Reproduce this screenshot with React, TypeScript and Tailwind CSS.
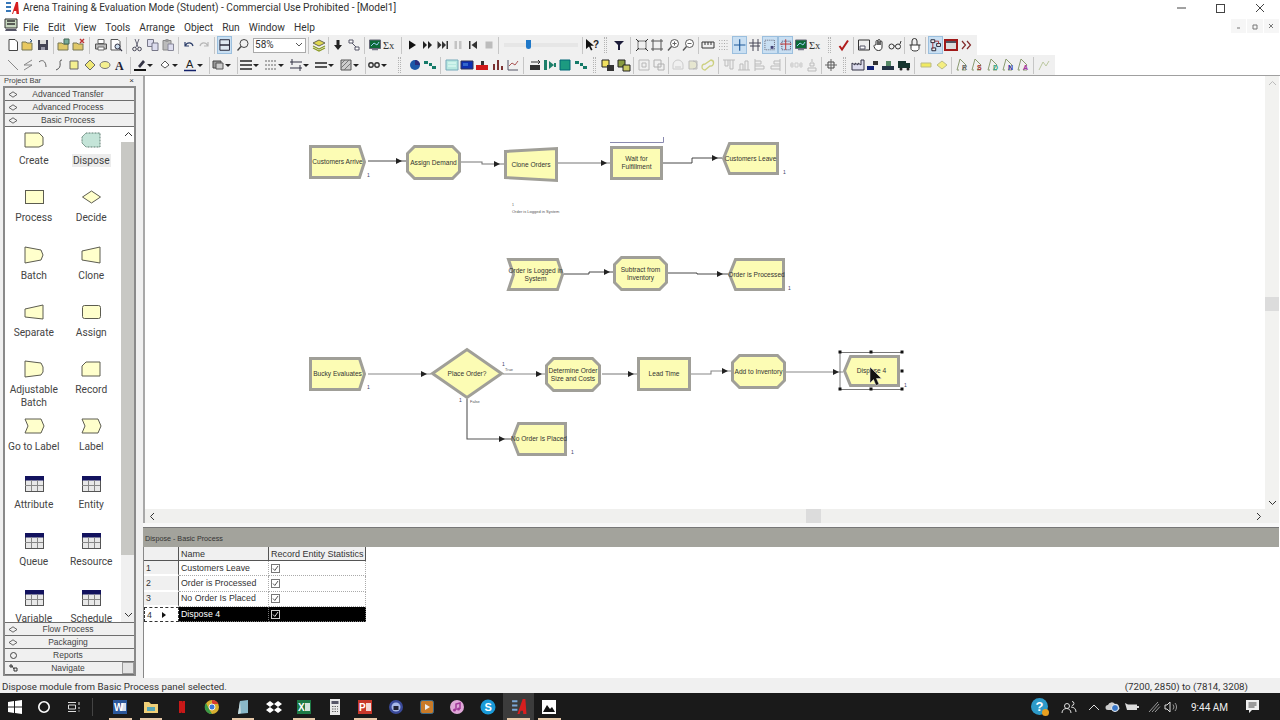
import React from "react";

type N = React.ReactNode;
const I: Record<string, N> = {
  doc: <path d="M3 1.500h6l2.500 2.500v8.500H3z" fill="#fff" stroke="#444" />,
  open: <><path d="M1 4h4l1 1h5v7H1z" fill="#e8c860" stroke="#775" /><path d="M9 1l2 2-2 1" fill="none" stroke="#357" /></>,
  save: <><path d="M2 2h10v10H2z" fill="#445" /><path d="M4 2h6v4H4z" fill="#ddd" /><path d="M5 9h4v3H5z" fill="#99a" /></>,
  opent: <><path d="M1 5h4l1 1h5v6H1z" fill="#e0c868" stroke="#775" /><path d="M7 1h5v5H7z" fill="#7a9" stroke="#465" /></>,
  openx: <><path d="M1 5h4l1 1h5v6H1z" fill="#e0c868" stroke="#775" /><path d="M8 1l4 4M12 1L8 5" stroke="#b33" strokeWidth="1.400" /></>,
  print: <><path d="M4 1.500h6v4H4z" fill="#fff" stroke="#666" /><path d="M1.500 6h11v5h-11z" fill="#bbb" stroke="#555" /><path d="M4 9h6v3H4z" fill="#fff" stroke="#666" /></>,
  prev: <><path d="M2 1.500h7l2 2V12H2z" fill="#fff" stroke="#555" /><circle cx="8.500" cy="8.500" r="2.500" fill="#cde" stroke="#334" /><path d="M10.500 10.500l2.500 2.500" stroke="#334" strokeWidth="1.300" /></>,
  cut: <><path d="M5 1l3 8M9 1L6 9" stroke="#667" /><circle cx="4.500" cy="11" r="1.800" fill="none" stroke="#445" /><circle cx="9.500" cy="11" r="1.800" fill="none" stroke="#445" /></>,
  copy: <><path d="M1.500 1.500h6v7h-6z" fill="#dde" stroke="#778" /><path d="M6 5h6v7.500H6z" fill="#dde" stroke="#778" /></>,
  paste: <><path d="M2 2.500h8V12H2z" fill="#bbb" stroke="#888" /><path d="M7 6h5.500v6.500H7z" fill="#dde" stroke="#889" /><path d="M4.500 1h3v3h-3z" fill="#999" /></>,
  undo: <path d="M3 4v4h4M3.500 7.500C5 4 10 4 11 8" fill="none" stroke="#2d3f6a" strokeWidth="1.200" />,
  redo: <path d="M11 4v4H7M10.500 7.500C9 4 4 4 3 8" fill="none" stroke="#b8b8b8" strokeWidth="1.200" />,
  layout: <><path d="M2 1.500h10v11H2z" fill="#dfe9f2" stroke="#223" /><path d="M2 7h10" stroke="#223" strokeWidth="1.500" /></>,
  zoom: <><circle cx="8" cy="5.500" r="4" fill="none" stroke="#444" /><path d="M5 8.500L1.500 12.500" stroke="#444" strokeWidth="1.400" /></>,
  layers: <><path d="M1 5l6-3 6 3-6 3z" fill="#e0d850" stroke="#665" /><path d="M1 8l6 3 6-3M1 10l6 3 6-3" fill="none" stroke="#8a9a20" strokeWidth="1.200" /></>,
  down: <path d="M5.500 2h3v5H11l-4 5-4-5h2.500z" fill="#222" />,
  conn: <><path d="M2 2h4v3H2zM8 9h4v3H8z" fill="#fff" stroke="#556" /><path d="M5 5l4 4" stroke="#556" /></>,
  screen: <><path d="M1.500 2h11v8.500h-11z" fill="#0d6a38" stroke="#667" /><path d="M3 8l3-3 3 2 2-3" fill="none" stroke="#9ce" /><path d="M4 11.500h6" stroke="#778" strokeWidth="1.500" /></>,
  sigma: <text x="0" y="11" fontSize="10.500" fontFamily="Liberation Serif" fill="#333">Σx</text>,
  play: <path d="M4 2.500l7 4.500-7 4.500z" fill="#111" />,
  ff: <path d="M3 3l4 4-4 4zM8 3l4 4-4 4z" fill="#222" />,
  ffe: <path d="M1.500 3l4 4-4 4zM6 3l4 4-4 4zM10.500 3H12v8h-1.500z" fill="#333" />,
  pause: <path d="M3.500 3h2.500v8H3.500zM8 3h2.500v8H8z" fill="#c4c4c4" />,
  back: <path d="M3 3h1.500v8H3zM11 3v8L5.500 7z" fill="#333" />,
  stop: <path d="M3.500 3.500h7v7h-7z" fill="#bcbcbc" />,
  help: <><path d="M1 1v10l3-2.500 2 4 1.500-.7-2-4H9z" fill="#111" /><text x="8" y="10" fontSize="10" fontWeight="bold" fontFamily="Liberation Sans" fill="#222">?</text></>,
  filter: <path d="M2 3h10L8 7v5H6V7z" fill="#1c1c3a" />,
  fit1: <><path d="M3 3h8v8H3z" fill="none" stroke="#777" /><path d="M1 1l3 3M13 1l-3 3M1 13l3-3M13 13l-3-3" stroke="#333" /></>,
  fit2: <path d="M1 3h12M1 11h12M3 1v12M11 1v12" fill="none" stroke="#555" />,
  zin: <><circle cx="8.500" cy="5.500" r="4" fill="#fff" stroke="#555" /><path d="M5.500 8.500L2 12.500" stroke="#555" strokeWidth="1.300" /><path d="M6.500 5.500h4M8.500 3.500v4" stroke="#666" /></>,
  zout: <><circle cx="8.500" cy="5.500" r="4" fill="#fff" stroke="#555" /><path d="M5.500 8.500L2 12.500" stroke="#555" strokeWidth="1.300" /><path d="M6.500 5.500h4" stroke="#666" /></>,
  ruler: <path d="M1 4h12v6H1zM4 4v3M7 4v3M10 4v3" fill="none" stroke="#333" />,
  grid: <path d="M2 2.500h10M2 5.500h10M2 8.500h10M2 11.500h10" fill="none" stroke="#aaa" strokeDasharray="1 1.500" />,
  cross: <path d="M7 1v12M1 7h12" stroke="#1f5a99" strokeWidth="1.200" />,
  cross2: <path d="M5 1v12M10 1v12M1 5h12M2 8h10" stroke="#445" />,
  snap: <><path d="M2 2h10v10H2z" fill="none" stroke="#667" strokeDasharray="1 1" /><path d="M8 8h3v3H8z" fill="#447" /></>,
  glue: <><path d="M3 3h9v9H3z" fill="none" stroke="#446" strokeDasharray="1 1" /><path d="M7 1v11M1 6h12" stroke="#b33" /></>,
  check: <path d="M2.500 8l2.500 3.500L11 2.500" fill="none" stroke="#b01c1c" strokeWidth="2" />,
  win: <><path d="M1.500 2h11v10h-11z" fill="#eee" stroke="#333" /><path d="M3 8h5v3H3z" fill="#fff" stroke="#556" /></>,
  hand: <path d="M4 7V3.500a1 1 0 012 0V7V2.500a1 1 0 012 0V7 4a1 1 0 012 0v5c0 2-1 3.500-3.500 3.500S3 11 2 8.500c-.5-1 1-2 2-1.500z" fill="#fff" stroke="#333" />,
  glass: <><circle cx="3.500" cy="8.500" r="2.500" fill="none" stroke="#333" /><circle cx="10" cy="8.500" r="2.500" fill="none" stroke="#333" /><path d="M6 8h1.500M12 6l1-3" stroke="#333" /></>,
  lockhand: <><path d="M4 7V3a2.500 2.500 0 015 0v4" fill="none" stroke="#333" /><path d="M1.500 7h11M3 7v3.500c0 1.500 1.500 2.500 4 2.500s4-1 4-2.500V7" fill="#fff" stroke="#333" /></>,
  flow: <><path d="M2 1.500h4v3H2zM8 5.500h4v3H8zM3 10h4v3H3z" fill="#eee" stroke="#223" /><path d="M4 4.500V11M6 3h4v3" fill="none" stroke="#a33" /></>,
  redrect: <><path d="M1 2h12v10H1z" fill="#ddd" stroke="#a01818" strokeWidth="2" /><path d="M2 4h10" stroke="#223" strokeWidth="1.500" /></>,
  more: <path d="M3 3l3.500 4L3 11M8 3l3.500 4L8 11" fill="none" stroke="#832a2a" strokeWidth="1.200" />,
  line: <path d="M2 2l10 10" stroke="#888" />,
  poly: <path d="M11 2L3 7h8l-8 5" fill="none" stroke="#888" />,
  arc: <path d="M3 4c3-3 7-1 7 5" fill="none" stroke="#666" />,
  curve: <path d="M10 2C5 2 12 9 4 12" fill="none" stroke="#555" />,
  rect: <path d="M3 3h8v8H3z" fill="#f4f090" stroke="#666" />,
  pgon: <path d="M2 7l5-5 5 5-5 5z" fill="#f0e878" stroke="#666" />,
  ell: <ellipse cx="7" cy="7" rx="5" ry="3.500" fill="#f4f090" stroke="#777" />,
  A: <text x="2" y="12" fontSize="12" fontWeight="bold" fontFamily="Liberation Serif" fill="#223">A</text>,
  pen: <><path d="M5 8l5-6 2 2-5 6z" fill="#334" /><path d="M1 12h12" stroke="#111" strokeWidth="2" /></>,
  fill: <><path d="M3 7l4-4 4 4-4 3z" fill="#fff" stroke="#555" /><path d="M1 12.500h12" stroke="#eee" strokeWidth="1.500" /></>,
  fontA: <><text x="3" y="10" fontSize="11" fontFamily="Liberation Sans" fill="#222">A</text><path d="M1 12.500h12" stroke="#12206a" strokeWidth="1.500" /></>,
  shade: <><path d="M2 3h8v7H2z" fill="#999" stroke="#444" /><path d="M5 5h7v6H5z" fill="#ccc" stroke="#555" /></>,
  lw: <path d="M1 3h12M1 7h12M1 11h12" stroke="#222" strokeWidth="1.700" />,
  dash: <path d="M1 3h12M1 7h12M1 11h12" stroke="#666" strokeDasharray="2 1" />,
  arrows: <path d="M1 4h12M1 10h12M3 1v6M11 7v6" stroke="#334" />,
  lstyle: <path d="M1 5h12M1 9h12" stroke="#222" strokeWidth="1.500" />,
  pat: <><path d="M2 2h10v10H2z" fill="#ccc" stroke="#555" /><path d="M2 6l4-4M2 10l8-8M5 12l7-7" stroke="#777" /></>,
  lock2: <><circle cx="4" cy="7" r="2.200" fill="none" stroke="#333" strokeWidth="1.400" /><circle cx="10" cy="7" r="2.200" fill="none" stroke="#333" strokeWidth="1.400" /></>,
  pie: <><circle cx="7" cy="7" r="5" fill="#1c58a8" /><path d="M7 7V2a5 5 0 015 5z" fill="#2c2c7a" /></>,
  teal: <><path d="M1 2h12v10H1z" fill="#b8e8e0" stroke="#7ab" /><path d="M3 5h8M3 8h8" stroke="#e8fff8" /></>,
  bluebox: <><path d="M1 3h12v8H1z" fill="#0d2fb0" stroke="#335" /><path d="M3 5h5v3H3z" fill="#36c" /></>,
  redbars: <><path d="M1 7h12v5H1z" fill="#d01818" /><path d="M6 3h3v4H6z" fill="#333" /></>,
  bars: <path d="M2 12V6h2v6zM6 12V2h2v10zM10 12V8h2v4z" fill="#7a3030" />,
  linechart: <><path d="M2 2v10h10" fill="none" stroke="#556" /><path d="M3 8l3-3 3 2 3-4" fill="none" stroke="#a55" /></>,
  label: <><path d="M2 7h10v5H2z" fill="#333" /><path d="M3 4h8" stroke="#333" /><path d="M10 2l2 2-2 2" fill="none" stroke="#333" /></>,
  mod1: <path d="M1 2h3v10H1z M6 3l5 4-5 4z M11 5h2v4h-2z" fill="#1d7f6a" />,
  tealsq: <path d="M2 2h10v10H2z" fill="#1c9a80" stroke="#067" />,
  mini: <path d="M1 3h4v3H1zM6 5h3v3H6zM9 8h4v3H9z" fill="#147a68" />,
  sq1: <><path d="M1 2h7v7H1z" fill="#f0e060" stroke="#222" /><path d="M6 7h7v6H6z" fill="#333" /></>,
  sq2: <><path d="M1 2h7v7H1z" fill="#889a40" stroke="#222" /><path d="M6 7h7v6H6z" fill="#c8c860" stroke="#222" /></>,
  gfit: <path d="M2 2h10v10H2zM5 5h4v4H5z" fill="none" stroke="#b8b8b8" />,
  gstack: <path d="M2 2h7v7H2zM6 6h6v6H6z" fill="none" stroke="#b0b0b0" />,
  g1: <><path d="M2 11V7a5 5 0 0110 0v4z" fill="none" stroke="#ccc" /><path d="M4 8h6v4H4z" fill="#ddd" /></>,
  g2: <path d="M3 3h8v8H3zM7 3a4 4 0 010 8" fill="#e6e6d0" stroke="#bbb" />,
  g3: <path d="M4 12a3 3 0 010-6l6-4a3 3 0 01-1 6z" fill="none" stroke="#ccd080" strokeWidth="1.300" />,
  al1: <path d="M1 2h12M3 2v6h3V2M8 2v9h3V2" fill="none" stroke="#bbb" />,
  al2: <path d="M1 12h12M3 12V6h3v6M8 12V3h3v9" fill="none" stroke="#bbb" />,
  al3: <path d="M2 1v12M2 3h6v3H2M2 8h9v3H2" fill="none" stroke="#bbb" />,
  al4: <path d="M12 1v12M12 3H6v3h6M12 8H3v3h9" fill="none" stroke="#bbb" />,
  dist: <path d="M1 7h3M6 5h3v4H6zM10 7h3M2 5h2v4H2zM11 5h2v4h-2z" fill="none" stroke="#ccc" />,
  dist2: <path d="M7 1v3M5 5h4v3H5zM3 10h8v3H3z" fill="none" stroke="#bbb" />,
  ctr: <><path d="M4 4h6v6H4z" fill="#eee" stroke="#444" /><path d="M7 1v12M1 7h12" stroke="#666" /></>,
  factory: <path d="M1 12V5l3 2V5l3 2V5l3 2V2h3v10z" fill="#dde" stroke="#334" />,
  tank: <><path d="M1 8h7v4H1z" fill="#127" /><path d="M7 3h5v4H7z" fill="#333" /></>,
  tank2: <><path d="M1 8h12v4H1z" fill="#234" /><path d="M5 3h5v5H5z" fill="#586" /></>,
  truck: <><path d="M1 3h8v7H1zM9 5h4v5H9z" fill="#15342e" /><circle cx="4" cy="11" r="1.500" fill="#222" /><circle cx="11" cy="11" r="1.500" fill="#222" /></>,
  yrect: <path d="M2 5h10v4H2z" fill="#f0ea60" stroke="#bb8" />,
  ydia: <path d="M2 7l5-4 5 4-5 4z" fill="#f4ee80" stroke="#bb8" />,
};
const route = (c: string, t: string) => (
  <>
    <path d="M5 1l-3 11h2M5 1l6 6-4 5h4" fill="none" stroke="#8a9a70" />
    <text x="7" y="12" fontSize="7" fontWeight="bold" fontFamily="Liberation Sans" fill={c}>{t}</text>
  </>
);
I.r = route("#666", "R");
I.s = route("#a33", "S");
I.d = route("#3a8", "D");
I.n = route("#33a", "N");
I.a = route("#a3a", "A");
I.q = <path d="M2 12L6 4l3 4 3-5" fill="none" stroke="#bcc8a0" />;

const Tb = ({ n, on, w = "w-[15.400px]" }: { n: string; on?: boolean; w?: string }) => (
  <div className={`flex h-[18px] shrink-0 items-center justify-center ${w} ${on ? "border border-[#9bbfde] bg-[#c9dff2]" : ""}`}>
    <svg width="14" height="14" viewBox="0 0 14 14">{I[n]}</svg>
  </div>
);
const Caret = () => (
  <div className="flex h-[18px] w-[11px] shrink-0 items-center justify-start">
    <div className="h-0 w-0 border-x-[3px] border-t-[3px] border-x-transparent border-t-[#222]" />
  </div>
);
const S = ({ w }: { w: string }) => (
  <div className={`flex h-[18px] shrink-0 items-center justify-center ${w}`}>
    <div className="h-[17px] w-px bg-[#c6c6c6]" />
  </div>
);
const Grip = ({ w }: { w: string }) => (
  <div className={`flex h-[18px] shrink-0 items-center justify-center gap-px ${w}`}>
    <div className="h-[16px] w-[3px] border-x border-dotted border-[#b4b4b4]" />
  </div>
);

const shapes: Record<string, (a: number, b: number, c: number, d: number) => string> = {
  create: (a, b, c, d) => `${a},${b} ${c - 5},${b} ${c},${(b + d) / 2} ${c - 5},${d} ${a},${d}`,
  dispose: (a, b, c, d) => `${a + 6},${b} ${c},${b} ${c},${d} ${a + 6},${d} ${a},${(b + d) / 2}`,
  assign: (a, b, c, d) => `${a + 7},${b} ${c - 7},${b} ${c},${b + 7} ${c},${d - 7} ${c - 7},${d} ${a + 7},${d} ${a},${d - 7} ${a},${b + 7}`,
  clone: (a, b, c, d) => `${a},${b + 3} ${c},${b} ${c},${d} ${a},${d - 3}`,
  process: (a, b, c, d) => `${a},${b} ${c},${b} ${c},${d} ${a},${d}`,
  decide: (a, b, c, d) => `${a},${(b + d) / 2} ${(a + c) / 2},${b} ${c},${(b + d) / 2} ${(a + c) / 2},${d}`,
  sep: (a, b, c, d) => `${a},${b} ${c - 5},${b} ${c},${(b + d) / 2} ${c - 5},${d} ${a},${d} ${a + 5},${(b + d) / 2}`,
};
const mods: [string, number, number, number, number, string[]][] = [
  ["create", 309, 146, 366, 180, ["Customers Arrive"]],
  ["assign", 406, 146, 461, 181, ["Assign Demand"]],
  ["clone", 504, 148, 558, 183, ["Clone Orders"]],
  ["process", 610, 147, 663, 181, ["Wait for", "Fulfillment"]],
  ["dispose", 722, 143, 779, 176, ["Customers Leave"]],
  ["sep", 507, 259, 564, 292, ["Order is Logged in", "System"]],
  ["assign", 613, 257, 668, 292, ["Subtract from", "Inventory"]],
  ["dispose", 728, 259, 785, 292, ["Order is Processed"]],
  ["create", 309, 358, 366, 392, ["Bucky Evaluates"]],
  ["decide", 431, 349, 503, 400, ["Place Order?"]],
  ["assign", 545, 358, 601, 393, ["Determine Order", "Size and Costs"]],
  ["process", 637, 358, 691, 392, ["Lead Time"]],
  ["assign", 731, 355, 786, 390, ["Add to Inventory"]],
  ["dispose", 843, 356, 900, 388, ["Dispose 4"]],
  ["dispose", 511, 423, 567, 457, ["No Order Is Placed"]],
];
const wires: [string, string, [number, number]][] = [
  ["#333", "M368 162H406", [396, 162]],
  ["#777", "M461 163H482V165H504", [494, 165]],
  ["#777", "M558 164H610", [601, 164]],
  ["#333", "M663 164H692V159H722", [712, 159]],
  ["#333", "M564 275H589V273H613", [604, 273]],
  ["#333", "M668 274H697V275H728", [717, 275]],
  ["#888", "M368 375H431", [421, 375]],
  ["#888", "M503 375H545", [536, 375]],
  ["#555", "M467 400V440H511", [499, 440]],
  ["#777", "M602 375H637", [628, 375]],
  ["#888", "M691 375H711V372H731", [722, 372]],
  ["#888", "M786 373H843", [833, 373]],
];
const ones: [number, number][] = [[367, 178], [783, 175], [788, 291], [367, 390], [502, 367], [459, 403], [571, 455], [904, 388]];
const handles: [number, number][] = [[840, 353], [871, 353], [902, 353], [902, 372], [840, 390], [871, 390], [902, 390]];

const Canvas = () => (
  <svg className="block h-[433px] w-[1122px]" viewBox="143 77 1122 433">
    {wires.map(([c, d, [x, y]], i) => (
      <g key={i}>
        <path d={d} fill="none" stroke={c} strokeWidth={c === "#333" ? 0.9 : 1.1} />
        <path d={`M${x} ${y - 3}L${x + 6} ${y}L${x} ${y + 3}z`} fill="#222" />
      </g>
    ))}
    <path d="M610 143.500H663.500V138" fill="none" stroke="#8a8ab0" />
    {mods.map(([k, a, b, c, d, t], i) => (
      <g key={i}>
        <polygon points={shapes[k](a + 1.500, b + 1.500, c - 1.500, d - 1.500)} fill="#fcfcb4" stroke="#a09f98" strokeWidth="3" />
        <text textAnchor="middle" fontFamily="Liberation Sans" fontSize="6.600" fill="#333">
          {t.map((l, j) => (
            <tspan key={j} x={(a + c) / 2} y={(b + d) / 2 + 2.400 + (j - (t.length - 1) / 2) * 8}>{l}</tspan>
          ))}
        </text>
      </g>
    ))}
    {ones.map(([x, y], i) => (
      <text key={i} x={x} y={y} fontSize="5" fontFamily="Liberation Sans" fill="#446">1</text>
    ))}
    <text x="505" y="372" fontSize="4" fontFamily="Liberation Sans" fill="#555">True</text>
    <text x="470" y="404" fontSize="4" fontFamily="Liberation Sans" fill="#555">False</text>
    <text x="512" y="207" fontSize="3.500" fontFamily="Liberation Sans" fill="#555">1</text>
    <text x="512" y="213.500" fontSize="4" fontFamily="Liberation Sans" fill="#555">Order is Logged in System</text>
    <path d="M840 353.500H902M840 353.500V390.500H902" fill="none" stroke="#555" strokeWidth=".8" />
    {handles.map(([x, y], i) => <rect key={i} x={x - 1.500} y={y - 1.500} width="3" height="3" fill="#111" />)}
    <path d="M870 368v16l3.500-3.500 2.500 6 3-1.300-2.500-5.700h5z" fill="#111" stroke="#eee" strokeWidth=".5" />
  </svg>
);

const ModIcon = ({ k }: { k: string }) => {
  const s = { fill: "#ffffcc", stroke: "#5c5c50", strokeWidth: 1 };
  const p: Record<string, string> = {
    create: "3,2 17,2 21,6 21,14 17,16 3,16",
    dispose: "7,2 21,2 21,16 7,16 3,12 3,6",
    batch: "3,1 19,4 21,9 19,14 3,17",
    clone: "3,5 21,1 21,17 3,14",
    separate: "3,6 21,2 21,16 3,14",
    adj: "3,1 19,3 21,7 21,12 19,15 3,17",
    record: "7,2 21,2 21,16 3,16 3,6",
    goto: "3,2 19,2 22,9 19,16 3,16 6,9",
  };
  return (
    <svg width="24" height="18" viewBox="0 0 24 18">
      {k === "process" && <rect x="3.500" y="2.500" width="18" height="13" {...s} />}
      {k === "assign" && <rect x="3.500" y="2.500" width="18" height="13" rx="2" {...s} />}
      {k === "decide" && <polygon points="12.500,3 21.500,9 12.500,15 3.500,9" {...s} />}
      {k === "dispose" && <polygon points={p.dispose} fill="#c4e4d8" stroke="#5c7c70" strokeDasharray="1 .5" />}
      {k === "table" && (
        <>
          <rect x="3.500" y="1.500" width="18" height="15" fill="#e8e8e8" stroke="#555" />
          <rect x="3" y="1" width="19" height="4.500" fill="#12125e" />
          <path d="M3 10.500h18M9.500 5v11M15.500 5v11" stroke="#888" />
        </>
      )}
      {p[k] && k !== "dispose" && <polygon points={p[k]} {...s} />}
    </svg>
  );
};

const pal: [string, string][] = [
  ["create", "Create"], ["dispose", "Dispose"], ["process", "Process"], ["decide", "Decide"],
  ["batch", "Batch"], ["clone", "Clone"], ["separate", "Separate"], ["assign", "Assign"],
  ["adj", "Adjustable Batch"], ["record", "Record"], ["goto", "Go to Label"], ["goto", "Label"],
  ["table", "Attribute"], ["table", "Entity"], ["table", "Queue"], ["table", "Resource"],
  ["table", "Variable"], ["table", "Schedule"],
];

const Bar = ({ t, icon, extra }: { t: string; icon?: N; extra?: N }) => (
  <div className="relative flex h-[13.300px] items-center justify-center border-b border-[#6e6e6e] bg-[#f0f0f0] pr-[3px] font-['Liberation_Sans'] text-[8.500px] leading-none text-[#444]">
    <div className="absolute left-[2px] top-[1px] flex h-[10px] w-[12px] items-center justify-center">
      {icon ?? <svg width="10" height="7" viewBox="0 0 10 7"><path d="M1 3.500L5 .8l4 2.700-4 2.700z" fill="none" stroke="#444" strokeWidth=".8" /></svg>}
    </div>
    {t}
    {extra}
  </div>
);

const rows = [
  ["1", "Customers Leave"],
  ["2", "Order is Processed"],
  ["3", "No Order Is Placed"],
  ["4", "Dispose 4"],
];
const Chk = ({ dark }: { dark?: boolean }) => (
  <div className={`relative flex h-[9px] w-[9px] items-center justify-center border ${dark ? "border-[#ccc]" : "border-[#777] bg-white"}`}>
    <svg width="7" height="7" viewBox="0 0 7 7"><path d="M1 3.500l1.800 2L6 1" fill="none" stroke={dark ? "#ddd" : "#555"} /></svg>
  </div>
);

const Task = ({ children, u, on }: { children: N; u?: boolean; on?: boolean }) => (
  <div className={`relative flex h-[27px] w-[30.650px] shrink-0 items-center justify-center ${on ? "bg-[#3c3c3c]" : ""}`}>
    {children}
    {u && <div className="absolute bottom-0 left-[4px] right-[4px] h-[2px] bg-[#e6c8a8]" />}
  </div>
);
const Tile = ({ c, t }: { c: string; t: string }) => (
  <svg width="16" height="16" viewBox="0 0 16 16">
    <rect x="1" y="1" width="14" height="14" fill={c} />
    <rect x="9" y="4" width="5" height="8" fill="#fff" opacity=".8" />
    <text x="2" y="12" fontSize="10" fontWeight="bold" fontFamily="Liberation Sans" fill="#fff">{t}</text>
  </svg>
);

export default function App() {
  return (
    <div className="flex h-[720px] w-[1280px] flex-col overflow-hidden bg-white font-['Roboto',sans-serif] text-[#333]">
      {/* title */}
      <div className="flex h-[15px] shrink-0 items-center">
        <svg className="ml-[5px] mr-[3px]" width="15" height="14" viewBox="0 0 15 14">
          <path d="M1 2h5M1 6h5M1 10h5" stroke="#3878b8" strokeWidth="1.800" />
          <path d="M7 13L11 1h2l1 12h-2.500l-.3-3H9l-1 3z" fill="#d81f1f" />
        </svg>
        <span className="pt-[2px] text-[10.150px] leading-none text-[#333]">Arena Training &amp; Evaluation Mode (Student) - Commercial Use Prohibited - [Model1]</span>
        <div className="ml-auto flex items-center">
          <svg width="120" height="14" viewBox="0 0 120 14">
            <path d="M17 7h9" stroke="#444" />
            <rect x="56.500" y="3.500" width="8" height="8" fill="none" stroke="#444" />
            <path d="M96 3l8 8M104 3l-8 8" stroke="#444" />
          </svg>
        </div>
      </div>
      {/* menu */}
      <div className="flex h-[20px] shrink-0 items-center">
        <svg className="ml-[4px] mr-[5px]" width="14" height="14" viewBox="0 0 14 14">
          <path d="M1 1h12v9H1z" fill="#c8d8c0" stroke="#333" />
          <path d="M3 3h8M3 6h8" stroke="#333" strokeWidth="1.500" />
          <path d="M2 11h10l1 2H1z" fill="#556" />
        </svg>
        <div className="flex gap-[9px] pt-[6px] text-[10.200px] leading-none text-[#333]">
          {["File", "Edit", "View", "Tools", "Arrange", "Object", "Run", "Window", "Help"].map((m) => <span key={m}>{m}</span>)}
        </div>
        <div className="ml-auto mr-[1px] flex h-[16px] items-end gap-px">
          {["M4 7h3", "M3 4h4v4H3z", "M3 3l4 4M7 3l-4 4"].map((d, i) => (
            <div key={i} className="flex h-[14px] w-[15.500px] items-center justify-center bg-[#f6f6f6]">
              <svg width="10" height="10" viewBox="0 0 10 10"><path d={d} fill="none" stroke="#777" /></svg>
            </div>
          ))}
        </div>
      </div>
      {/* toolbar 1 */}
      <div className="flex h-[20px] w-[977px] shrink-0 items-center bg-[#f0f0f0] pl-[5px]">
        <Tb n="doc" /><Tb n="open" /><Tb n="save" /><S w="w-[5px]" /><Tb n="opent" /><Tb n="openx" /><S w="w-[6px]" /><Tb n="print" /><Tb n="prev" /><S w="w-[6px]" />
        <Tb n="cut" /><Tb n="copy" /><Tb n="paste" /><S w="w-[5px]" /><Tb n="undo" /><Tb n="redo" /><S w="w-[5px]" /><Tb n="layout" on /><Tb n="zoom" w="w-[21px]" />
        <div className="flex h-[15px] w-[53px] shrink-0 items-center justify-between border border-[#aaa] bg-white pl-[1px] pr-[2px] text-[10px] leading-none">
          58%<svg width="8" height="6" viewBox="0 0 8 6"><path d="M1 1l3 3 3-3" fill="none" stroke="#555" /></svg>
        </div>
        <S w="w-[5px]" /><Tb n="layers" /><S w="w-[4px]" /><Tb n="down" /><Tb n="conn" /><S w="w-[6px]" /><Tb n="screen" /><Tb n="sigma" /><S w="w-[6px]" />
        <Tb n="play" /><Tb n="ff" /><Tb n="ffe" /><Tb n="pause" /><Tb n="back" /><Tb n="stop" /><S w="w-[5px]" />
        <div className="relative mx-[3px] h-[18px] w-[74px] shrink-0">
          <div className="absolute left-0 right-0 top-[7px] h-[4px] bg-[#e6e6e6]" />
          <div className="absolute left-[22px] top-[4px] h-[9px] w-[5px] rounded-b-[3px] bg-[#1f78c8]" />
        </div>
        <S w="w-[3px]" /><Tb n="help" /><Grip w="w-[12px]" /><Tb n="filter" /><S w="w-[7px]" /><Tb n="fit1" /><Tb n="fit2" /><Tb n="zin" /><Tb n="zout" /><S w="w-[5px]" />
        <Tb n="ruler" /><Tb n="grid" /><Tb n="cross" on /><Tb n="cross2" /><Tb n="snap" on /><Tb n="glue" on /><Tb n="screen" /><Tb n="sigma" /><Grip w="w-[12px]" />
        <Tb n="check" /><S w="w-[5px]" /><Tb n="win" /><Tb n="hand" /><Tb n="glass" /><S w="w-[5px]" /><Tb n="lockhand" /><S w="w-[5px]" /><Tb n="flow" on /><Tb n="redrect" /><Tb n="more" />
      </div>
      {/* toolbar 2 */}
      <div className="flex h-[21px] shrink-0 border-b border-[#a0a0a0]">
        <div className="flex w-[1055px] shrink-0 items-center bg-[#f0f0f0] pl-[5px]">
          <Tb n="line" /><Tb n="poly" /><Tb n="arc" /><Tb n="curve" /><Tb n="rect" /><Tb n="pgon" /><Tb n="ell" /><Tb n="A" /><S w="w-[5px]" />
          <Tb n="pen" w="w-[14px]" /><Caret /><Tb n="fill" w="w-[14px]" /><Caret /><Tb n="fontA" w="w-[14px]" /><Caret /><S w="w-[3px]" />
          <Tb n="shade" w="w-[14px]" /><Caret /><S w="w-[3px]" />
          <Tb n="lw" w="w-[14px]" /><Caret /><Tb n="dash" w="w-[14px]" /><Caret /><Tb n="arrows" w="w-[14px]" /><Caret /><Tb n="lstyle" w="w-[14px]" /><Caret /><Tb n="pat" w="w-[14px]" /><Caret /><S w="w-[3px]" />
          <Tb n="lock2" w="w-[14px]" /><Caret /><Grip w="w-[15px]" /><Tb n="pie" /><Tb n="mini" /><S w="w-[6px]" />
          <Tb n="teal" /><Tb n="bluebox" /><Tb n="redbars" /><Tb n="bars" /><Tb n="linechart" /><S w="w-[6px]" /><Tb n="label" /><Tb n="mod1" /><Tb n="tealsq" /><Tb n="mini" /><Grip w="w-[12px]" />
          <Tb n="sq1" /><Tb n="sq2" /><S w="w-[5px]" /><Tb n="gfit" /><Tb n="gstack" /><S w="w-[3px]" /><Tb n="g1" /><Tb n="g2" /><Tb n="g3" /><S w="w-[5px]" />
          <Tb n="al1" /><Tb n="al2" /><Tb n="al3" /><Tb n="al4" /><S w="w-[6px]" /><Tb n="dist" /><Tb n="dist2" /><S w="w-[4px]" /><Tb n="ctr" /><Grip w="w-[11px]" />
          <Tb n="factory" /><Tb n="tank" /><Tb n="tank2" /><Tb n="truck" /><S w="w-[7px]" /><Tb n="yrect" /><Tb n="ydia" /><S w="w-[5px]" />
          <Tb n="r" /><Tb n="s" /><Tb n="d" /><Tb n="n" /><Tb n="a" /><S w="w-[5px]" /><Tb n="q" />
        </div>
      </div>
      {/* main */}
      <div className="flex min-h-0 flex-1">
        {/* project bar */}
        <div className="flex w-[143px] shrink-0 flex-col bg-[#f0f0f0] pl-[3px] pr-[7px]">
          <div className="flex h-[10px] items-center justify-between pl-px pr-[2px] font-['Liberation_Sans'] text-[7.500px] leading-none text-[#444]">
            Project Bar<span className="text-[8px] text-[#333]">×</span>
          </div>
          <div className="flex h-[590px] flex-col border-2 border-b-[1px] border-[#8a8a8a] bg-white">
            <Bar t="Advanced Transfer" />
            <Bar t="Advanced Process" />
            <Bar t="Basic Process" />
            <div className="flex h-[496px] shrink-0 overflow-hidden border-b border-[#6e6e6e]">
              <div className="grid h-[530px] w-[116px] shrink-0 grid-cols-[57.500px_57.500px] auto-rows-[57.300px] pt-[4px]">
                {pal.map(([k, t], i) => (
                  <div key={i} className="flex flex-col items-center text-[10.200px] leading-[13px] text-[#444]">
                    <ModIcon k={k} />
                    <span className={`mt-[5px] max-w-[56px] px-[1px] text-center ${t === "Dispose" ? "bg-[#ececec]" : ""}`}>{t}</span>
                  </div>
                ))}
              </div>
              <div className="relative flex w-[14px] shrink-0 flex-col bg-[#f0f0f0]">
                <div className="flex h-[15px] items-center justify-center bg-white text-[#333]">
                  <svg width="9" height="7" viewBox="0 0 9 7"><path d="M1 5l3.500-3.500L8 5" fill="none" stroke="#333" /></svg>
                </div>
                <div className="h-[413px] bg-[#c8c8c4]" />
                <div className="mt-auto flex h-[15px] items-center justify-center">
                  <svg width="9" height="7" viewBox="0 0 9 7"><path d="M1 2l3.500 3.500L8 2" fill="none" stroke="#333" /></svg>
                </div>
              </div>
            </div>
            <Bar t="Flow Process" />
            <Bar t="Packaging" />
            <Bar t="Reports" icon={<div className="h-[7px] w-[7px] rounded-full border border-[#444]" />} />
            <Bar
              t="Navigate"
              icon={<svg width="9" height="8" viewBox="0 0 9 8"><path d="M1 1h2v2H1zM5 4h3v3H5zM3 2l2 3" fill="none" stroke="#333" /></svg>}
              extra={<div className="absolute right-0 top-0 h-[12px] w-[12px] border border-[#999] bg-[#e4e4e4]" />}
            />
          </div>
        </div>
        {/* right */}
        <div className="flex min-w-0 flex-1 flex-col bg-white pr-px">
          <div className="flex h-[433px] shrink-0 border-l-2 border-[#a8a8a8]">
            <div className="h-[433px] w-[1120px] shrink-0 overflow-hidden">
              <div className="-ml-[2px]"><Canvas /></div>
            </div>
            <div className="flex w-[14px] shrink-0 flex-col items-center bg-[#f2f2f0]">
              <div className="flex h-[14px] w-full items-center justify-center">
                <svg width="9" height="7" viewBox="0 0 9 7"><path d="M1 5l3.500-3.500L8 5" fill="none" stroke="#bbb" /></svg>
              </div>
              <div className="mt-[207px] h-[14px] w-full bg-[#dcdcdc]" />
              <div className="mt-auto flex h-[14px] w-full items-center justify-center">
                <svg width="9" height="7" viewBox="0 0 9 7"><path d="M1 2l3.500 3.500L8 2" fill="none" stroke="#333" /></svg>
              </div>
            </div>
          </div>
          <div className="flex h-[14px] shrink-0 items-center border-l-2 border-[#a8a8a8] bg-[#f0f0ee] pr-[15px]">
            <div className="flex w-[12px] justify-center pl-[2px]">
              <svg width="7" height="9" viewBox="0 0 7 9"><path d="M5 1L1.500 4.500 5 8" fill="none" stroke="#333" /></svg>
            </div>
            <div className="ml-[649px] h-[14px] w-[15px] bg-[#dcdcdc]" />
            <div className="ml-auto flex w-[12px] justify-center">
              <svg width="7" height="9" viewBox="0 0 7 9"><path d="M2 1l3.500 3.500L2 8" fill="none" stroke="#333" /></svg>
            </div>
          </div>
          <div className="h-[4px] shrink-0 bg-[#f8f8f8]" />
          <div className="flex h-[20px] shrink-0 items-center border-t border-[#777] bg-[#a3a39c] pl-[2px] pt-[2px] font-['Liberation_Sans'] text-[7.200px] leading-none text-[#333]">
            Dispose - Basic Process
          </div>
          <div className="min-h-0 flex-1 border-l border-[#888] bg-white font-['Liberation_Sans'] text-[8.800px] leading-none text-[#333]">
            <div className="flex h-[14px] items-stretch text-[9px]">
              <div className="w-[35px] border-b border-r border-[#555] bg-[#f0f0f0]" />
              <div className="flex w-[90px] items-center border-b border-r border-[#555] bg-[#f0f0f0] pl-[2px] pt-px">Name</div>
              <div className="flex w-[97px] items-center border-b border-r border-[#555] bg-[#f0f0f0] pl-[2px] pt-px">Record Entity Statistics</div>
            </div>
            {rows.map(([n, t], i) => {
              const sel = i === 3;
              return (
                <div key={n} className={`flex h-[15.300px] items-stretch ${sel ? "text-white" : ""}`}>
                  <div className={`flex w-[35px] items-center pl-[2px] pt-px ${sel ? "border border-dashed border-[#333] bg-white text-[#333]" : "border-b-2 border-r border-b-white border-r-[#555] bg-[#f0f0f0]"}`}>
                    <span>{n}</span>
                    {sel && <div className="ml-[10px] h-0 w-0 border-y-[3px] border-l-[4px] border-y-transparent border-l-[#111]" />}
                  </div>
                  <div className={`flex w-[90px] items-center border-b border-r border-dotted pl-[2px] ${sel ? "border-[#777] bg-black" : "border-[#aaa]"}`}>{t}</div>
                  <div className={`flex w-[97px] items-center border-b border-r border-dotted pl-[2px] ${sel ? "border-[#777] bg-black" : "border-[#aaa]"}`}><Chk dark={sel} /></div>
                </div>
              );
            })}
          </div>
        </div>
      </div>
      {/* status */}
      <div className="flex h-[15px] shrink-0 items-center bg-[#f0f0f0] pl-[2px] pt-[3px] text-[9.750px] leading-none text-[#333]">
        Dispose module from Basic Process panel selected.
        <span className="ml-auto mr-[32px]">(7200, 2850) to (7814, 3208)</span>
      </div>
      {/* taskbar */}
      <div className="flex h-[27px] shrink-0 items-center bg-[#1a1a1a] text-white">
        <div className="flex w-[105px] shrink-0 items-center">
          <div className="flex w-[29px] justify-center">
            <svg width="14" height="14" viewBox="0 0 14 14"><path d="M0 2l6-1v5.500H0zM7 1l7-1v6.500H7zM0 7.500h6V13l-6-1zM7 7.500h7V14l-7-1z" fill="#fff" /></svg>
          </div>
          <div className="flex w-[30px] justify-center">
            <svg width="14" height="14" viewBox="0 0 14 14"><circle cx="7" cy="7" r="5.200" fill="none" stroke="#fff" strokeWidth="1.600" /></svg>
          </div>
          <div className="flex w-[30px] justify-center">
            <svg width="14" height="14" viewBox="0 0 14 14"><path d="M1 2.500h8M1 11.500h8M1.500 5h7v4h-7zM12 2v3M12 7v2M12 10.500v1" fill="none" stroke="#ddd" /></svg>
          </div>
          <div className="ml-[3px] h-[18px] w-px bg-[#444]" />
        </div>
        <Task u><Tile c="#2b579a" t="W" /></Task>
        <Task u><svg width="16" height="16" viewBox="0 0 16 16"><path d="M1 3h5l2 2h7v9H1z" fill="#f0d078" /><path d="M4 8h8v4H4z" fill="#58a8b8" /></svg></Task>
        <Task><svg width="16" height="16" viewBox="0 0 16 16"><path d="M5 2h3l3 12H8zM5 2h2.500v12H5zM8.500 2H11v12H8.500z" fill="#c81818" /></svg></Task>
        <Task>
          <svg width="16" height="16" viewBox="0 0 16 16">
            <circle cx="8" cy="8" r="7" fill="#d8b030" /><path d="M8 1a7 7 0 016.300 4H8z" fill="#d83a2e" /><path d="M2 4l3.500 7L8 15a7 7 0 01-6-11z" fill="#3a9a48" />
            <circle cx="8" cy="8" r="3" fill="#3c78d8" stroke="#eee" />
          </svg>
        </Task>
        <Task u><svg width="16" height="16" viewBox="0 0 16 16"><path d="M5 2l8-1v13l-10 1z" fill="#8ab8c8" /><path d="M5 2L3 15l3-1z" fill="#c8dce0" /></svg></Task>
        <Task><svg width="16" height="14" viewBox="0 0 16 14"><path d="M4 1L0 4l4 3-4 3 4 3 4-3 4 3 4-3-4-3 4-3-4-3-4 3zM4 7l4-3 4 3-4 3z" fill="#fff" fillRule="evenodd" /></svg></Task>
        <Task u><Tile c="#1e7a45" t="X" /></Task>
        <Task><svg width="12" height="16" viewBox="0 0 12 16"><rect x="1" y="0" width="10" height="16" fill="#e8e8e8" /><path d="M2.500 2h7v3h-7z" fill="#556" /><path d="M3 7.500h6M3 10h6M3 12.500h6" stroke="#666" strokeDasharray="1.500 1" /></svg></Task>
        <Task u><Tile c="#c8382a" t="P" /></Task>
        <Task><svg width="16" height="16" viewBox="0 0 16 16"><circle cx="8" cy="8" r="7" fill="#3a4a9a" /><circle cx="8" cy="8" r="4.500" fill="#a8b8e8" /><rect x="5.500" y="7" width="5" height="4" fill="#223" /></svg></Task>
        <Task><svg width="16" height="16" viewBox="0 0 16 16"><rect x="1.500" y="1.500" width="13" height="13" rx="2" fill="#c87a28" stroke="#3a6a8a" /><path d="M6 5l5 3-5 3z" fill="#eee" /></svg></Task>
        <Task><svg width="16" height="16" viewBox="0 0 16 16"><circle cx="8" cy="8" r="7" fill="#e0a8d8" /><path d="M7 11V5l4-1v6" fill="none" stroke="#a03898" strokeWidth="1.500" /><circle cx="5.500" cy="11" r="1.500" fill="#a03898" /><circle cx="9.500" cy="10" r="1.500" fill="#a03898" /></svg></Task>
        <Task><svg width="16" height="16" viewBox="0 0 16 16"><circle cx="8" cy="8" r="7.500" fill="#1a9ad8" /><text x="4.500" y="12" fontSize="11" fontWeight="bold" fontFamily="Liberation Sans" fill="#fff">S</text></svg></Task>
        <Task on u><svg width="16" height="15" viewBox="0 0 15 14"><path d="M1 2h5M1 6h5M1 10h5" stroke="#7aa8d8" strokeWidth="1.800" /><path d="M6 14L11 0h2.500l1 14h-3l-.3-3H9l-1 3z" fill="#d81f1f" /></svg></Task>
        <Task u><svg width="16" height="16" viewBox="0 0 16 16"><rect x="1" y="1" width="14" height="14" fill="#fff" /><path d="M2 13l4-7 3 4 2-2 3 5z" fill="#111" /></svg></Task>
        <div className="ml-auto flex items-center pr-[21px]">
          <svg className="mr-[11px]" width="20" height="20" viewBox="0 0 20 20">
            <circle cx="9.500" cy="9.500" r="8.500" fill="#2d9ac8" /><circle cx="15.500" cy="15.500" r="3.500" fill="#e8a020" />
            <text x="5.500" y="14" fontSize="13" fontWeight="bold" fontFamily="Liberation Sans" fill="#fff">?</text>
          </svg>
          <svg className="mr-[11px]" width="16" height="14" viewBox="0 0 16 14"><circle cx="6" cy="6" r="2.500" fill="none" stroke="#ddd" /><path d="M1 13c0-6 9-6 9 0M11 1.500a2 2 0 11-.1 4M10 7c3 0 5 2 5 5" fill="none" stroke="#ddd" /></svg>
          <svg className="mr-[5px]" width="12" height="10" viewBox="0 0 12 10"><path d="M1 8l5-5 5 5" fill="none" stroke="#ddd" /></svg>
          <svg className="mr-[3.500px]" width="16" height="13" viewBox="0 0 16 13"><path d="M3 10a2.500 2.500 0 010-5 4 4 0 017-1 3 3 0 014 3 2 2 0 01-1 3z" fill="#ccc" /><circle cx="10" cy="8" r="3.500" fill="#3a78c8" stroke="#eee" /></svg>
          <svg className="mr-[7.500px]" width="15" height="10" viewBox="0 0 15 10"><path d="M1 1l3 1.500h9V8H3z" fill="#ddd" /><path d="M13 4h2v2h-2z" fill="#ddd" /></svg>
          <svg className="mr-[3.500px]" width="14" height="12" viewBox="0 0 14 12"><path d="M2 11L11 1M5 11L12 3M8 11L13 5.500" fill="none" stroke="#999" /></svg>
          <svg className="mr-[11.500px]" width="15" height="12" viewBox="0 0 15 12"><path d="M1 4h2l3-3v10L3 8H1z" fill="none" stroke="#ddd" /><path d="M9 3.500a4 4 0 010 5M11 2a6 6 0 010 8" fill="none" stroke="#999" /></svg>
          <span className="mr-[18px] pt-[3px] text-[10px] leading-none text-[#eee]">9:44 AM</span>
          <svg width="13" height="13" viewBox="0 0 13 13"><path d="M0 0h13v10H6l-3 3v-3H0z" fill="#eee" /><path d="M2.500 3h8M2.500 5h8M2.500 7h6" stroke="#444" /></svg>
        </div>
      </div>
    </div>
  );
}
